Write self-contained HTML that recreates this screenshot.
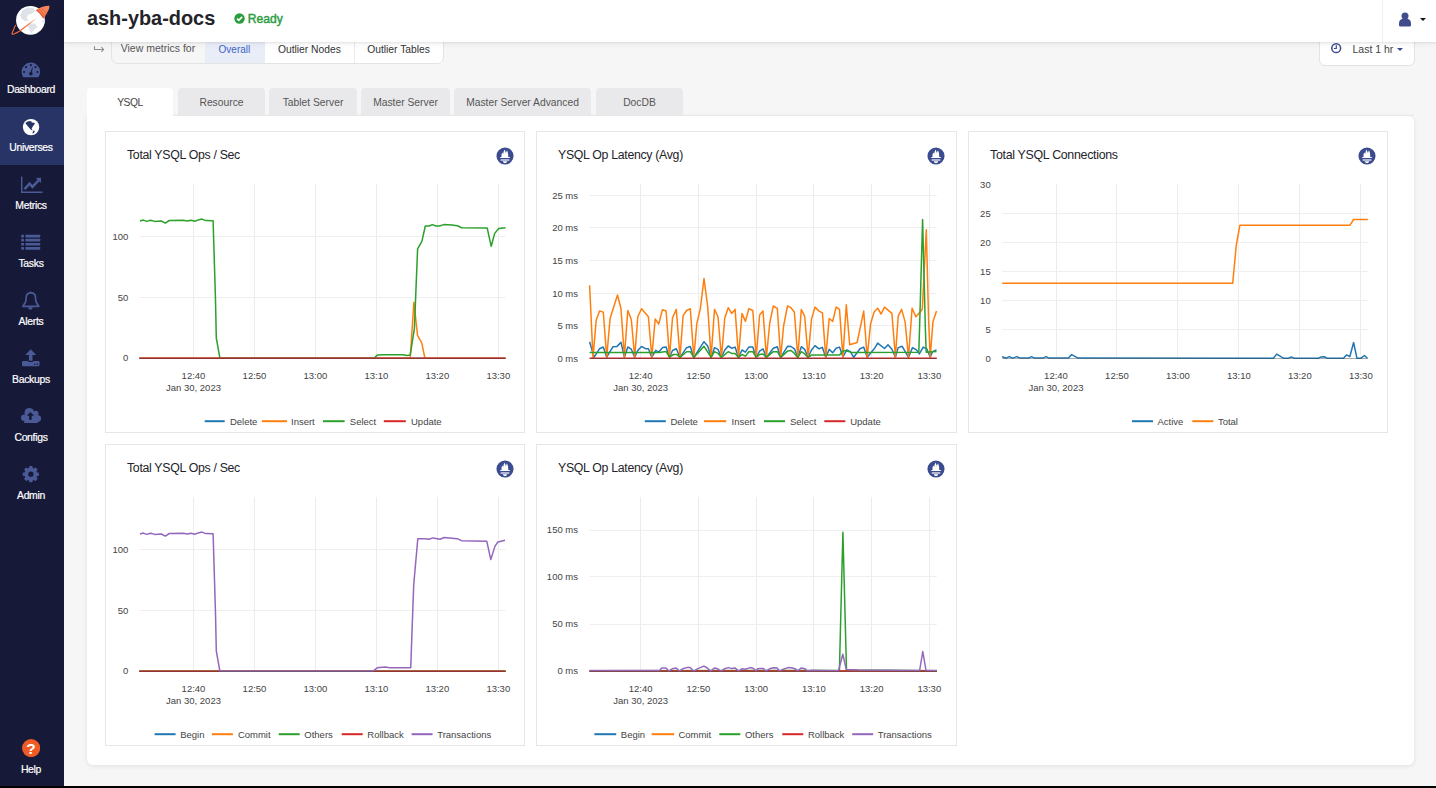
<!DOCTYPE html>
<html><head><meta charset="utf-8"><style>
*{box-sizing:border-box;margin:0;padding:0}
html,body{width:1436px;height:788px;overflow:hidden;background:#f6f6f6;font-family:"Liberation Sans", sans-serif;}
.abs{position:absolute}
#side{position:absolute;left:0;top:0;width:64px;height:786px;background:#161938}
.sitem{position:absolute;left:0;width:64px;height:58px}
.slabel{position:absolute;left:0;width:62px;top:34.6px;text-align:center;color:#fff;font-size:10.4px;font-weight:normal;-webkit-text-stroke:0.2px #fff;letter-spacing:-0.3px}
#header{position:absolute;left:64px;top:0;width:1372px;height:42px;background:#fff;box-shadow:0 1px 2px rgba(0,0,0,0.08), 0 2px 8px rgba(0,0,0,0.05);z-index:5}
#bottombar{position:absolute;left:0;top:786px;width:1436px;height:2px;background:#000;z-index:10}
.panel{position:absolute;width:420px;height:302px;border:1px solid #e6e6e6;background:#fff}
.ptitle{position:absolute;font-size:11.7px;color:#232329;white-space:nowrap;letter-spacing:-0.3px}
.tab{position:absolute;top:88px;height:27px;background:#e9e9eb;border-radius:4px 4px 0 0;font-size:10.3px;color:#555;text-align:center;line-height:29px;white-space:nowrap}
</style></head><body>
<div id="side">
<svg style="position:absolute;left:8px;top:2px" width="46" height="36" viewBox="8 2 46 36">
<defs><linearGradient id="tr" x1="36.4" y1="18" x2="20" y2="30.5" gradientUnits="userSpaceOnUse"><stop offset="0" stop-color="#f26b3a" stop-opacity="0.1"/><stop offset="0.5" stop-color="#f26b3a" stop-opacity="0.9"/><stop offset="1" stop-color="#f26b3a"/></linearGradient></defs>
<circle cx="30.46" cy="20.3" r="14.4" fill="#fff"/>
<path d="M20.4 15.7 L22.2 10.2 L27.7 7.5 L33.2 7.9 L35.5 11.1 L31.4 13.9 L27.7 14.8 L26.8 18.4 L29.1 20.3 L25 21.2 L21.3 18.4 Z" fill="#dfe3e7"/>
<path d="M29.1 23.5 L34.6 23.5 L37.8 26.7 L33.6 30.3 L30.9 33.5 L29.5 29.4 L27.7 25.8 Z" fill="#dfe3e7"/>
<path d="M41.4 19.4 L44.9 20.5 L44.6 23.5 L42 22.5 Z" fill="#e6e9ec"/>
<path d="M36.4 17.8 L20.5 29.6 L21.2 30.8 L36.9 18.6 Z" fill="url(#tr)"/>
<path d="M21 30.2 C18 32 15 33.6 13 34.2 C12 34.5 11.6 33.8 12.4 32.6 C13 31 14 28 15.6 25" fill="none" stroke="#f26b3a" stroke-width="1.1"/>
<path d="M35.9 10.2 C38.5 8.3 41 7 43.7 6.4 C46 5.8 48 5.6 49.4 5.8 C49.6 7.5 49 9.5 47.8 11.5 C46.5 14 45 16.5 43.2 18.4 C41.5 15.5 39 12.2 35.9 10.2 Z" fill="#f5845a"/>
<path d="M35.9 10.2 C39 12.2 41.5 15.5 43.2 18.4 L44.2 17.4 C42.5 14.5 40 11.5 37.2 9.4 Z" fill="#e85a2a"/>
<path d="M38.6 8.7 C41.3 10.6 43.6 13.6 45.3 16.2" fill="none" stroke="#e85a2a" stroke-width="0.9"/>
<path d="M40.9 7.5 C43.5 9.4 45.6 12 47.1 14.2" fill="none" stroke="#e85a2a" stroke-width="0.8"/>
</svg>
<div class="sitem" style="top:49px;"><svg style="position:absolute;left:16px;top:0px" width="32" height="32" viewBox="0 0 32 32"><g transform="translate(4 11)"><path d="M3.2 17.2 A9.3 9.3 0 1 1 18.5 17.2 Z" fill="#4a5a96"/><g fill="#161938"><circle cx="4.1" cy="12" r="1.1"/><circle cx="6.05" cy="7.1" r="1.1"/><circle cx="10.86" cy="5.2" r="1.1"/><circle cx="15.5" cy="7.1" r="1.1"/><circle cx="17.5" cy="12" r="1.1"/><circle cx="10.9" cy="13.8" r="1.8"/></g><path d="M10.2 13.6 L12.2 7.6 L12.8 7.8 L11.6 14 Z" fill="#161938"/></g></svg><div class="slabel">Dashboard</div></div>
<div class="sitem" style="top:107px;background:#283466;"><svg style="position:absolute;left:16px;top:0px" width="32" height="32" viewBox="0 0 32 32"><g transform="translate(4 11)"><circle cx="11.05" cy="9.1" r="8.2" fill="#fff"/><path d="M5.4 4.9 L7.5 3.5 L10.2 3.1 L12 3.9 L11.6 4.8 L13.2 4.4 L15 5.5 L13.5 7.6 L12.2 9.4 L11.6 10.4 L12.6 12.2 L11.2 11.9 L9.6 10.3 L8 8.6 L6.4 6.6 Z" fill="#283466"/><path d="M13.6 12.4 C14.8 12.6 15 13.6 14.2 14.4 L12.7 15.8 C12.5 14.6 12.6 13.2 13.6 12.4 Z" fill="#283466"/></g></svg><div class="slabel">Universes</div></div>
<div class="sitem" style="top:165px;"><svg style="position:absolute;left:16px;top:0px" width="32" height="32" viewBox="0 0 32 32"><g fill="#4a5a96"><rect x="5.0" y="11.6" width="1.45" height="16.4"/><rect x="5.0" y="26.5" width="21.5" height="1.5"/><path d="M19.9 13.1 L25.1 12.8 L24.9 17.9 Z"/></g><path d="M8.5 24.2 L13.55 18.7 L16.45 21.9 L22.6 15.4" fill="none" stroke="#4a5a96" stroke-width="2.5"/></svg><div class="slabel">Metrics</div></div>
<div class="sitem" style="top:223px;"><svg style="position:absolute;left:16px;top:0px" width="32" height="32" viewBox="0 0 32 32"><g fill="#4a5a96"><rect x="5.15" y="11.75" width="2.85" height="2.65" rx="0.4"/><rect x="9.4" y="11.75" width="14.8" height="2.65" rx="0.4"/><rect x="5.15" y="15.85" width="2.85" height="2.65" rx="0.4"/><rect x="9.4" y="15.85" width="14.8" height="2.65" rx="0.4"/><rect x="5.15" y="19.95" width="2.85" height="2.65" rx="0.4"/><rect x="9.4" y="19.95" width="14.8" height="2.65" rx="0.4"/><rect x="5.15" y="24.05" width="2.85" height="2.65" rx="0.4"/><rect x="9.4" y="24.05" width="14.8" height="2.65" rx="0.4"/></g></svg><div class="slabel">Tasks</div></div>
<div class="sitem" style="top:281px;"><svg style="position:absolute;left:16px;top:0px" width="32" height="32" viewBox="0 0 32 32"><path d="M6.9 25.3 L9.5 21.2 C9.9 19.6 10.2 18 10.2 16.6 C10.2 13.6 12 11.9 14.85 11.9 C17.7 11.9 19.5 13.6 19.5 16.6 C19.5 18 19.8 19.6 20.2 21.2 L22.8 25.3 Z" fill="none" stroke="#4a5a96" stroke-width="1.7" stroke-linejoin="round"/><path d="M12.1 26.2 H16.7 C16.6 27.6 15.8 28.6 14.4 28.6 C13 28.6 12.2 27.6 12.1 26.2 Z" fill="#4a5a96"/><circle cx="14.85" cy="11.3" r="0.9" fill="#4a5a96"/></svg><div class="slabel">Alerts</div></div>
<div class="sitem" style="top:339px;"><svg style="position:absolute;left:16px;top:0px" width="32" height="32" viewBox="0 0 32 32"><g fill="#4a5a96"><rect x="6" y="22.1" width="17.5" height="5.1" rx="1"/></g><rect x="12" y="20.5" width="5.3" height="2.4" rx="1" fill="#161938"/><g fill="#4a5a96"><path d="M14.75 10.3 L20.3 16 H16.5 V21.7 H12.9 V16 H9.2 Z"/></g><circle cx="18.7" cy="25.2" r="0.75" fill="#161938"/><circle cx="21.4" cy="25.2" r="0.75" fill="#161938"/></svg><div class="slabel">Backups</div></div>
<div class="sitem" style="top:397px;"><svg style="position:absolute;left:16px;top:0px" width="32" height="32" viewBox="0 0 32 32"><g fill="#4a5a96"><circle cx="13.3" cy="15.7" r="4.8"/><circle cx="19.9" cy="16.4" r="2.6"/><circle cx="8.2" cy="20.8" r="3.2"/><circle cx="21.8" cy="21.6" r="3.3"/><rect x="8.2" y="18" width="13.6" height="8" /></g><path d="M14.4 15 L18 18.7 H15.65 V22.8 H13.15 V18.7 H10.8 Z" fill="#161938"/></svg><div class="slabel">Configs</div></div>
<div class="sitem" style="top:455px;"><svg style="position:absolute;left:16px;top:0px" width="32" height="32" viewBox="0 0 32 32"><g fill="#4a5a96"><circle cx="14.86" cy="19.2" r="6.4"/><rect x="13.06" y="11.10" width="3.6" height="16.2" rx="0.8" transform="rotate(0 14.86 19.2)"/><rect x="13.06" y="11.10" width="3.6" height="16.2" rx="0.8" transform="rotate(45 14.86 19.2)"/><rect x="13.06" y="11.10" width="3.6" height="16.2" rx="0.8" transform="rotate(90 14.86 19.2)"/><rect x="13.06" y="11.10" width="3.6" height="16.2" rx="0.8" transform="rotate(135 14.86 19.2)"/></g><circle cx="14.86" cy="19.2" r="2.6" fill="#161938"/></svg><div class="slabel">Admin</div></div>
<div class="sitem" style="top:726px"><svg style="position:absolute;left:21.8px;top:13.3px" width="18.2" height="18.2" viewBox="0 0 18.2 18.2"><circle cx="9.1" cy="9.1" r="9.1" fill="#ef5b25"/><text x="9.1" y="14.6" text-anchor="middle" font-size="15.5" font-weight="bold" fill="#fff" font-family="'Liberation Sans', sans-serif">?</text></svg><div class="slabel" style="top:37.5px">Help</div></div>
</div>

<div id="header">
<div class="abs" style="left:23px;top:7.3px;font-size:19.9px;font-weight:bold;color:#232329;white-space:nowrap">ash-yba-docs</div>
<svg class="abs" style="left:170px;top:13px" width="11" height="11" viewBox="0 0 11 11"><circle cx="5.5" cy="5.5" r="5.2" fill="#2a9d3f"/><path d="M3 5.7 L4.8 7.4 L8.1 3.9" fill="none" stroke="#fff" stroke-width="1.6"/></svg>
<div class="abs" style="left:183.8px;top:12.1px;font-size:12.1px;font-weight:normal;-webkit-text-stroke:0.45px #2a9d3f;color:#2a9d3f;white-space:nowrap">Ready</div>
<div class="abs" style="left:1318px;top:0;width:1px;height:42px;background:#f0f0f0"></div>
<svg class="abs" style="left:1334px;top:12px" width="14" height="15" viewBox="0 0 14 15"><circle cx="7" cy="3.9" r="3.5" fill="#414c8c"/><path d="M1 11.5 C1 8.8 2.6 7.1 4.6 7.1 H9.4 C11.4 7.1 13 8.8 13 11.5 V13 C13 14 12.3 14.6 11.5 14.6 H2.5 C1.7 14.6 1 14 1 13 Z" fill="#414c8c"/></svg>
<div class="abs" style="left:1356px;top:18px;width:0;height:0;border-left:3px solid transparent;border-right:3px solid transparent;border-top:3.5px solid #111"></div>
</div>

<!-- view metrics toolbar -->
<svg class="abs" style="left:88px;top:40px" width="24" height="20" viewBox="88 40 24 20"><path d="M94.5 46.2 V49.4 H103.4 M101.4 47.2 L103.6 49.4 L101.4 51.8" fill="none" stroke="#8c8c8c" stroke-width="1.05"/></svg>
<div class="abs" style="left:111px;top:30px;width:333px;height:34px;border:1px solid #e3e3e3;border-radius:0 0 7px 7px;background:#f6f6f6;overflow:hidden">
 <div class="abs" style="left:8.7px;top:11px;font-size:10.5px;color:#555;white-space:nowrap">View metrics for</div>
 <div class="abs" style="left:92.5px;top:0;width:60px;height:33px;background:#e8edf8"></div>
 <div class="abs" style="left:106.6px;top:13px;font-size:10px;color:#3f63c7;white-space:nowrap">Overall</div>
 <div class="abs" style="left:152.5px;top:0;width:181px;height:33px;background:#fff"></div>
 <div class="abs" style="left:241.5px;top:0;width:1px;height:33px;background:#ececec"></div>
 <div class="abs" style="left:165.9px;top:13px;font-size:10.3px;color:#333;white-space:nowrap">Outlier Nodes</div>
 <div class="abs" style="left:255.2px;top:13px;font-size:10.3px;color:#333;white-space:nowrap">Outlier Tables</div>
</div>

<!-- time range -->
<div class="abs" style="left:1319px;top:30px;width:96px;height:36px;border:1px solid #e3e3e3;border-radius:0 0 6px 6px;background:#fff"></div>
<svg class="abs" style="left:1330px;top:42px" width="12" height="12" viewBox="0 0 12 12"><circle cx="6.2" cy="6.2" r="4.4" fill="none" stroke="#3b4b8f" stroke-width="1.5"/><path d="M6.3 3.3 V6.5 H3.9" fill="none" stroke="#3b4b8f" stroke-width="1.2"/></svg>
<div class="abs" style="left:1352.5px;top:43px;font-size:10.5px;color:#444;white-space:nowrap">Last 1 hr</div>
<div class="abs" style="left:1397px;top:48px;width:0;height:0;border-left:3px solid transparent;border-right:3px solid transparent;border-top:3px solid #3b4b8f"></div>

<!-- main container -->
<div class="abs" style="left:87px;top:116px;width:1327px;height:649px;background:#fff;border-radius:0 6px 6px 6px;box-shadow:0 1px 5px rgba(0,0,0,0.09)"></div>
<div class="tab" style="left:87px;width:86px;background:#fff;color:#444;height:29px;letter-spacing:-0.45px">YSQL</div>
<div class="abs" style="left:173px;top:115px;width:1241px;height:1px;background:#e8e8ea;z-index:2"></div>
<div class="tab" style="left:178px;width:87px">Resource</div>
<div class="tab" style="left:269px;width:88px">Tablet Server</div>
<div class="tab" style="left:361px;width:89px">Master Server</div>
<div class="tab" style="left:454px;width:137px">Master Server Advanced</div>
<div class="tab" style="left:596px;width:87px">DocDB</div>

<div class="panel" style="left:105px;top:131px;width:420px"></div>
<div class="ptitle" style="left:127px;top:147.8px;font-size:12.3px">Total YSQL Ops / Sec</div>
<svg style="position:absolute;left:495.5px;top:146.5px" width="18" height="18" viewBox="0 0 18 18">
<circle cx="9" cy="9" r="8.55" fill="#3b4b8f"/>
<path d="M3.6 10.1 L5.6 9.9 C5.3 8.5 5.5 7.0 6.3 5.6 L7.1 7.0 C7.3 5.4 7.8 4.0 8.5 2.4 C9.2 3.8 9.6 5.0 9.9 6.0 L10.9 3.3 C11.8 5.0 12.4 6.8 12.2 9.9 L14.5 10.1 L13.2 10.9 H5.0 Z" fill="#fff"/>
<rect x="4.65" y="12.4" width="8.7" height="1.2" fill="#fff"/>
<path d="M6.75 14.3 H11.25 C11.1 15.4 10.2 16.1 9 16.1 C7.8 16.1 6.9 15.4 6.75 14.3 Z" fill="#fff"/>
</svg>
<div class="panel" style="left:536px;top:131px;width:421px"></div>
<div class="ptitle" style="left:558px;top:147.8px;font-size:12.3px">YSQL Op Latency (Avg)</div>
<svg style="position:absolute;left:926.5px;top:146.5px" width="18" height="18" viewBox="0 0 18 18">
<circle cx="9" cy="9" r="8.55" fill="#3b4b8f"/>
<path d="M3.6 10.1 L5.6 9.9 C5.3 8.5 5.5 7.0 6.3 5.6 L7.1 7.0 C7.3 5.4 7.8 4.0 8.5 2.4 C9.2 3.8 9.6 5.0 9.9 6.0 L10.9 3.3 C11.8 5.0 12.4 6.8 12.2 9.9 L14.5 10.1 L13.2 10.9 H5.0 Z" fill="#fff"/>
<rect x="4.65" y="12.4" width="8.7" height="1.2" fill="#fff"/>
<path d="M6.75 14.3 H11.25 C11.1 15.4 10.2 16.1 9 16.1 C7.8 16.1 6.9 15.4 6.75 14.3 Z" fill="#fff"/>
</svg>
<div class="panel" style="left:968px;top:131px;width:420px"></div>
<div class="ptitle" style="left:990px;top:147.8px;font-size:12.4px">Total YSQL Connections</div>
<svg style="position:absolute;left:1357.5px;top:146.5px" width="18" height="18" viewBox="0 0 18 18">
<circle cx="9" cy="9" r="8.55" fill="#3b4b8f"/>
<path d="M3.6 10.1 L5.6 9.9 C5.3 8.5 5.5 7.0 6.3 5.6 L7.1 7.0 C7.3 5.4 7.8 4.0 8.5 2.4 C9.2 3.8 9.6 5.0 9.9 6.0 L10.9 3.3 C11.8 5.0 12.4 6.8 12.2 9.9 L14.5 10.1 L13.2 10.9 H5.0 Z" fill="#fff"/>
<rect x="4.65" y="12.4" width="8.7" height="1.2" fill="#fff"/>
<path d="M6.75 14.3 H11.25 C11.1 15.4 10.2 16.1 9 16.1 C7.8 16.1 6.9 15.4 6.75 14.3 Z" fill="#fff"/>
</svg>
<div class="panel" style="left:105px;top:444px;width:420px"></div>
<div class="ptitle" style="left:127px;top:460.8px;font-size:12.3px">Total YSQL Ops / Sec</div>
<svg style="position:absolute;left:495.5px;top:459.5px" width="18" height="18" viewBox="0 0 18 18">
<circle cx="9" cy="9" r="8.55" fill="#3b4b8f"/>
<path d="M3.6 10.1 L5.6 9.9 C5.3 8.5 5.5 7.0 6.3 5.6 L7.1 7.0 C7.3 5.4 7.8 4.0 8.5 2.4 C9.2 3.8 9.6 5.0 9.9 6.0 L10.9 3.3 C11.8 5.0 12.4 6.8 12.2 9.9 L14.5 10.1 L13.2 10.9 H5.0 Z" fill="#fff"/>
<rect x="4.65" y="12.4" width="8.7" height="1.2" fill="#fff"/>
<path d="M6.75 14.3 H11.25 C11.1 15.4 10.2 16.1 9 16.1 C7.8 16.1 6.9 15.4 6.75 14.3 Z" fill="#fff"/>
</svg>
<div class="panel" style="left:536px;top:444px;width:421px"></div>
<div class="ptitle" style="left:558px;top:460.8px;font-size:12.3px">YSQL Op Latency (Avg)</div>
<svg style="position:absolute;left:926.5px;top:459.5px" width="18" height="18" viewBox="0 0 18 18">
<circle cx="9" cy="9" r="8.55" fill="#3b4b8f"/>
<path d="M3.6 10.1 L5.6 9.9 C5.3 8.5 5.5 7.0 6.3 5.6 L7.1 7.0 C7.3 5.4 7.8 4.0 8.5 2.4 C9.2 3.8 9.6 5.0 9.9 6.0 L10.9 3.3 C11.8 5.0 12.4 6.8 12.2 9.9 L14.5 10.1 L13.2 10.9 H5.0 Z" fill="#fff"/>
<rect x="4.65" y="12.4" width="8.7" height="1.2" fill="#fff"/>
<path d="M6.75 14.3 H11.25 C11.1 15.4 10.2 16.1 9 16.1 C7.8 16.1 6.9 15.4 6.75 14.3 Z" fill="#fff"/>
</svg>
<svg class="abs" style="left:0;top:0" width="1436" height="788" viewBox="0 0 1436 788" font-family="'Liberation Sans', sans-serif">
<line x1="193.5" y1="184" x2="193.5" y2="358" stroke="#ececec" stroke-width="1"/>
<line x1="254.5" y1="184" x2="254.5" y2="358" stroke="#ececec" stroke-width="1"/>
<line x1="315.5" y1="184" x2="315.5" y2="358" stroke="#ececec" stroke-width="1"/>
<line x1="376.5" y1="184" x2="376.5" y2="358" stroke="#ececec" stroke-width="1"/>
<line x1="437.5" y1="184" x2="437.5" y2="358" stroke="#ececec" stroke-width="1"/>
<line x1="498.5" y1="184" x2="498.5" y2="358" stroke="#ececec" stroke-width="1"/>
<line x1="139.4" y1="297.5" x2="505.5" y2="297.5" stroke="#efefef" stroke-width="1"/>
<line x1="139.4" y1="236.5" x2="505.5" y2="236.5" stroke="#efefef" stroke-width="1"/>
<text x="128.3" y="361.4" font-size="9.5" text-anchor="end" fill="#444" font-weight="normal">0</text>
<text x="128.3" y="300.7" font-size="9.5" text-anchor="end" fill="#444" font-weight="normal">50</text>
<text x="128.3" y="239.9" font-size="9.5" text-anchor="end" fill="#444" font-weight="normal">100</text>
<text x="193.5" y="379.0" font-size="9.5" text-anchor="middle" fill="#444" font-weight="normal">12:40</text>
<text x="254.5" y="379.0" font-size="9.5" text-anchor="middle" fill="#444" font-weight="normal">12:50</text>
<text x="315.4" y="379.0" font-size="9.5" text-anchor="middle" fill="#444" font-weight="normal">13:00</text>
<text x="376.4" y="379.0" font-size="9.5" text-anchor="middle" fill="#444" font-weight="normal">13:10</text>
<text x="437.3" y="379.0" font-size="9.5" text-anchor="middle" fill="#444" font-weight="normal">13:20</text>
<text x="498.3" y="379.0" font-size="9.5" text-anchor="middle" fill="#444" font-weight="normal">13:30</text>
<text x="193.5" y="390.6" font-size="9.5" text-anchor="middle" fill="#444" font-weight="normal">Jan 30, 2023</text>
<line x1="204.7" y1="421.2" x2="224.7" y2="421.2" stroke="#1f77b4" stroke-width="2"/>
<text x="229.9" y="424.6" font-size="9.5" text-anchor="start" fill="#444" font-weight="normal">Delete</text>
<line x1="261.9" y1="421.2" x2="287" y2="421.2" stroke="#ff7f0e" stroke-width="2"/>
<text x="291.0" y="424.6" font-size="9.5" text-anchor="start" fill="#444" font-weight="normal">Insert</text>
<line x1="323" y1="421.2" x2="344.6" y2="421.2" stroke="#2ca02c" stroke-width="2"/>
<text x="349.8" y="424.6" font-size="9.5" text-anchor="start" fill="#444" font-weight="normal">Select</text>
<line x1="383.8" y1="421.2" x2="405.8" y2="421.2" stroke="#d62728" stroke-width="2"/>
<text x="411.0" y="424.6" font-size="9.5" text-anchor="start" fill="#444" font-weight="normal">Update</text>
<polyline points="139.4,358.2 505.5,358.2" fill="none" stroke="#1f77b4" stroke-width="1.5" stroke-linejoin="round"/>
<polyline points="139.4,358.2 410.2,358.2 413.9,302.3 417.6,335.7 421.7,342.6 424.9,358.2 505.5,358.2" fill="none" stroke="#ff7f0e" stroke-width="1.5" stroke-linejoin="round"/>
<polyline points="139.9,221.0 143.4,220.1 146.8,221.4 150.6,220.2 154.8,221.4 161.3,221.0 165.3,223.1 169.3,220.5 183.0,220.2 187.2,221.1 191.0,220.2 194.8,221.2 198.2,219.9 201.9,219.1 205.8,220.6 213.1,220.8 215.5,300.0 216.3,338.0 219.9,358.2 374.1,358.2 377.3,355.1 383.3,354.7 403.4,354.7 406.6,355.4 410.2,355.1 414.4,328.4 417.6,248.8 421.9,241.4 425.3,226.0 429.0,226.0 432.4,224.6 435.8,226.0 439.3,226.0 443.8,224.6 451.8,225.1 457.5,225.8 461.5,227.7 487.2,228.0 491.2,246.3 494.7,233.4 498.7,228.5 505.5,227.7" fill="none" stroke="#2ca02c" stroke-width="1.5" stroke-linejoin="round"/>
<polyline points="139.4,358.2 505.5,358.2" fill="none" stroke="#d62728" stroke-width="1.5" stroke-linejoin="round"/>
<line x1="193.5" y1="497" x2="193.5" y2="671" stroke="#ececec" stroke-width="1"/>
<line x1="254.5" y1="497" x2="254.5" y2="671" stroke="#ececec" stroke-width="1"/>
<line x1="315.5" y1="497" x2="315.5" y2="671" stroke="#ececec" stroke-width="1"/>
<line x1="376.5" y1="497" x2="376.5" y2="671" stroke="#ececec" stroke-width="1"/>
<line x1="437.5" y1="497" x2="437.5" y2="671" stroke="#ececec" stroke-width="1"/>
<line x1="498.5" y1="497" x2="498.5" y2="671" stroke="#ececec" stroke-width="1"/>
<line x1="139.4" y1="610.5" x2="505.5" y2="610.5" stroke="#efefef" stroke-width="1"/>
<line x1="139.4" y1="549.5" x2="505.5" y2="549.5" stroke="#efefef" stroke-width="1"/>
<text x="128.3" y="674.4" font-size="9.5" text-anchor="end" fill="#444" font-weight="normal">0</text>
<text x="128.3" y="613.7" font-size="9.5" text-anchor="end" fill="#444" font-weight="normal">50</text>
<text x="128.3" y="552.9" font-size="9.5" text-anchor="end" fill="#444" font-weight="normal">100</text>
<text x="193.5" y="692.0" font-size="9.5" text-anchor="middle" fill="#444" font-weight="normal">12:40</text>
<text x="254.5" y="692.0" font-size="9.5" text-anchor="middle" fill="#444" font-weight="normal">12:50</text>
<text x="315.4" y="692.0" font-size="9.5" text-anchor="middle" fill="#444" font-weight="normal">13:00</text>
<text x="376.4" y="692.0" font-size="9.5" text-anchor="middle" fill="#444" font-weight="normal">13:10</text>
<text x="437.3" y="692.0" font-size="9.5" text-anchor="middle" fill="#444" font-weight="normal">13:20</text>
<text x="498.3" y="692.0" font-size="9.5" text-anchor="middle" fill="#444" font-weight="normal">13:30</text>
<text x="193.5" y="703.6" font-size="9.5" text-anchor="middle" fill="#444" font-weight="normal">Jan 30, 2023</text>
<line x1="154.6" y1="734.2" x2="175.6" y2="734.2" stroke="#1f77b4" stroke-width="2"/>
<text x="180.2" y="737.6" font-size="9.5" text-anchor="start" fill="#444" font-weight="normal">Begin</text>
<line x1="211.9" y1="734.2" x2="232.9" y2="734.2" stroke="#ff7f0e" stroke-width="2"/>
<text x="237.9" y="737.6" font-size="9.5" text-anchor="start" fill="#444" font-weight="normal">Commit</text>
<line x1="278.7" y1="734.2" x2="299.7" y2="734.2" stroke="#2ca02c" stroke-width="2"/>
<text x="304.3" y="737.6" font-size="9.5" text-anchor="start" fill="#444" font-weight="normal">Others</text>
<line x1="341.7" y1="734.2" x2="362.7" y2="734.2" stroke="#d62728" stroke-width="2"/>
<text x="367.3" y="737.6" font-size="9.5" text-anchor="start" fill="#444" font-weight="normal">Rollback</text>
<line x1="411.6" y1="734.2" x2="432.6" y2="734.2" stroke="#9467bd" stroke-width="2"/>
<text x="437.2" y="737.6" font-size="9.5" text-anchor="start" fill="#444" font-weight="normal">Transactions</text>
<polyline points="139.4,671.2 505.5,671.2" fill="none" stroke="#1f77b4" stroke-width="1.5" stroke-linejoin="round"/>
<polyline points="139.4,671.2 505.5,671.2" fill="none" stroke="#ff7f0e" stroke-width="1.5" stroke-linejoin="round"/>
<polyline points="139.4,671.2 505.5,671.2" fill="none" stroke="#2ca02c" stroke-width="1.5" stroke-linejoin="round"/>
<polyline points="139.4,671.2 505.5,671.2" fill="none" stroke="#d62728" stroke-width="1.5" stroke-linejoin="round"/>
<polyline points="139.9,534.0 143.4,533.1 146.8,534.4 150.6,533.2 154.8,534.4 161.3,534.0 165.3,536.1 169.3,533.5 183.0,533.2 187.2,534.1 191.0,533.2 194.8,534.2 198.2,532.9 201.9,532.1 205.8,533.6 213.1,533.8 215.5,613.0 216.3,651.0 219.9,671.2 373.1,671.2 377.2,667.8 385.3,667.1 389.4,667.8 410.7,667.8 413.7,585.0 417.8,538.7 424.9,538.7 428.9,539.3 433.0,537.9 440.1,539.3 444.2,537.5 457.3,538.7 461.4,540.7 486.8,541.3 490.8,559.6 494.9,546.4 497.9,541.9 505.0,540.3" fill="none" stroke="#9467bd" stroke-width="1.5" stroke-linejoin="round"/>
<line x1="640.5" y1="184" x2="640.5" y2="358.3" stroke="#ececec" stroke-width="1"/>
<line x1="698.5" y1="184" x2="698.5" y2="358.3" stroke="#ececec" stroke-width="1"/>
<line x1="756.5" y1="184" x2="756.5" y2="358.3" stroke="#ececec" stroke-width="1"/>
<line x1="813.5" y1="184" x2="813.5" y2="358.3" stroke="#ececec" stroke-width="1"/>
<line x1="871.5" y1="184" x2="871.5" y2="358.3" stroke="#ececec" stroke-width="1"/>
<line x1="929.5" y1="184" x2="929.5" y2="358.3" stroke="#ececec" stroke-width="1"/>
<line x1="589.6" y1="325.5" x2="936.8" y2="325.5" stroke="#efefef" stroke-width="1"/>
<line x1="589.6" y1="293.5" x2="936.8" y2="293.5" stroke="#efefef" stroke-width="1"/>
<line x1="589.6" y1="260.5" x2="936.8" y2="260.5" stroke="#efefef" stroke-width="1"/>
<line x1="589.6" y1="227.5" x2="936.8" y2="227.5" stroke="#efefef" stroke-width="1"/>
<line x1="589.6" y1="195.5" x2="936.8" y2="195.5" stroke="#efefef" stroke-width="1"/>
<text x="578.0" y="361.7" font-size="9.5" text-anchor="end" fill="#444" font-weight="normal">0 ms</text>
<text x="578.0" y="329.1" font-size="9.5" text-anchor="end" fill="#444" font-weight="normal">5 ms</text>
<text x="578.0" y="296.5" font-size="9.5" text-anchor="end" fill="#444" font-weight="normal">10 ms</text>
<text x="578.0" y="263.9" font-size="9.5" text-anchor="end" fill="#444" font-weight="normal">15 ms</text>
<text x="578.0" y="231.3" font-size="9.5" text-anchor="end" fill="#444" font-weight="normal">20 ms</text>
<text x="578.0" y="198.7" font-size="9.5" text-anchor="end" fill="#444" font-weight="normal">25 ms</text>
<text x="640.7" y="379.0" font-size="9.5" text-anchor="middle" fill="#444" font-weight="normal">12:40</text>
<text x="698.4" y="379.0" font-size="9.5" text-anchor="middle" fill="#444" font-weight="normal">12:50</text>
<text x="756.1" y="379.0" font-size="9.5" text-anchor="middle" fill="#444" font-weight="normal">13:00</text>
<text x="813.9" y="379.0" font-size="9.5" text-anchor="middle" fill="#444" font-weight="normal">13:10</text>
<text x="871.6" y="379.0" font-size="9.5" text-anchor="middle" fill="#444" font-weight="normal">13:20</text>
<text x="929.3" y="379.0" font-size="9.5" text-anchor="middle" fill="#444" font-weight="normal">13:30</text>
<text x="640.7" y="390.6" font-size="9.5" text-anchor="middle" fill="#444" font-weight="normal">Jan 30, 2023</text>
<line x1="644.8" y1="421.2" x2="665.8" y2="421.2" stroke="#1f77b4" stroke-width="2"/>
<text x="670.4" y="424.6" font-size="9.5" text-anchor="start" fill="#444" font-weight="normal">Delete</text>
<line x1="704" y1="421.2" x2="726.2" y2="421.2" stroke="#ff7f0e" stroke-width="2"/>
<text x="731.5" y="424.6" font-size="9.5" text-anchor="start" fill="#444" font-weight="normal">Insert</text>
<line x1="764" y1="421.2" x2="785" y2="421.2" stroke="#2ca02c" stroke-width="2"/>
<text x="790.0" y="424.6" font-size="9.5" text-anchor="start" fill="#444" font-weight="normal">Select</text>
<line x1="824.3" y1="421.2" x2="845.3" y2="421.2" stroke="#d62728" stroke-width="2"/>
<text x="850.2" y="424.6" font-size="9.5" text-anchor="start" fill="#444" font-weight="normal">Update</text>
<polyline points="589.6,341.8 594.1,357.2 599.6,348.7 603.3,347.0 606.7,357.2 613.0,346.7 617.0,346.4 621.0,342.4 624.4,357.2 627.8,347.0 631.3,349.2 634.7,357.2 637.8,350.4 641.5,346.4 645.5,348.7 648.4,348.7 651.8,357.2 655.8,350.4 658.7,352.1 662.7,347.5 666.1,347.0 669.5,357.2 672.5,350.5 676.3,348.8 680.0,357.4 686.6,347.7 690.3,346.5 693.8,357.4 704.0,341.7 707.7,346.0 711.1,357.4 714.5,347.7 718.0,349.4 721.4,357.4 724.8,350.0 728.2,346.0 731.7,348.2 735.1,347.1 738.5,357.4 742.0,350.0 745.4,352.2 748.8,347.1 752.8,347.1 756.2,357.4 759.6,351.1 763.0,348.8 766.4,357.4 773.3,348.2 777.3,346.7 780.7,357.4 787.5,346.3 791.0,346.5 794.4,348.8 797.8,357.4 801.3,346.7 804.7,349.4 808.1,357.4 811.5,350.0 815.0,345.6 819.0,348.8 822.4,347.4 825.8,357.4 829.2,349.4 832.7,352.8 836.1,348.2 839.5,347.1 842.9,356.8 846.8,349.9 850.3,351.6 853.7,357.3 860.0,348.8 863.7,347.1 867.2,357.3 874.2,348.8 877.7,343.1 884.5,348.5 888.0,344.8 891.9,349.3 895.4,357.3 898.2,347.6 902.2,346.3 908.5,357.3 912.5,347.6 916.5,349.9 919.3,353.9 923.3,347.1 926.8,348.8 930.2,357.3 932.5,351.6 936.5,349.9" fill="none" stroke="#1f77b4" stroke-width="1.5" stroke-linejoin="round"/>
<polyline points="589.6,285.3 593.0,357.8 596.2,320.1 599.6,311.0 603.3,312.1 606.7,357.2 610.1,318.4 617.5,295.0 621.0,308.7 624.4,357.2 627.8,310.4 631.3,319.5 634.7,357.2 637.8,316.7 641.5,308.7 648.4,316.7 651.8,357.2 655.2,319.0 658.7,324.1 662.4,309.8 666.1,311.0 669.5,357.2 672.5,318.0 676.3,309.4 680.0,357.4 683.1,315.7 686.6,310.5 690.3,308.8 693.8,357.4 696.8,323.7 700.3,308.8 704.0,278.6 707.7,306.5 711.1,357.4 714.5,309.4 718.0,316.8 721.4,357.4 724.8,318.0 728.2,307.7 731.7,313.4 735.1,309.4 738.5,357.4 742.0,313.4 745.4,321.4 748.8,308.8 752.8,310.5 756.2,357.4 759.6,315.1 763.0,311.1 766.4,357.4 769.8,322.5 773.3,306.0 777.3,308.3 780.7,357.4 783.6,326.0 787.5,306.0 791.0,307.7 794.4,312.3 797.8,357.4 801.3,309.4 804.7,316.3 808.1,357.4 811.5,319.1 815.0,307.1 819.0,311.1 822.4,312.8 825.8,357.4 829.2,318.5 832.7,321.4 836.1,307.1 839.5,309.4 842.9,357.3 846.3,304.8 849.7,344.8 857.1,342.5 863.7,311.1 867.2,357.3 870.6,323.7 874.2,311.7 877.7,308.2 881.1,314.0 884.5,307.1 891.9,313.4 895.4,357.3 898.2,316.2 901.6,309.4 905.1,321.9 908.5,357.3 912.1,308.2 915.9,316.8 919.9,312.2 922.3,309.2 926.3,229.8 928.6,320.0 930.2,357.3 933.0,321.4 936.5,311.1" fill="none" stroke="#ff7f0e" stroke-width="1.5" stroke-linejoin="round"/>
<polyline points="589.6,352.4 659.2,352.4 666.1,351.5 669.5,357.0 673.4,354.5 676.9,354.5 680.0,357.4 686.6,351.7 690.3,351.7 693.8,357.4 704.0,346.3 711.1,357.4 714.5,351.7 718.0,353.4 721.4,357.4 728.2,351.7 731.7,353.4 735.1,353.4 738.5,357.4 742.0,354.5 745.4,356.2 748.8,351.7 752.8,351.7 756.2,357.4 759.6,354.5 763.0,353.9 766.4,357.4 773.3,351.7 777.3,351.7 780.7,357.4 787.5,351.1 791.0,350.5 794.4,353.4 797.8,357.4 801.3,351.7 804.7,353.9 808.1,357.4 811.5,355.1 839.5,355.1 842.9,351.1 845.0,350.5 851.4,352.4 918.8,352.2 919.8,320.0 922.6,219.5 925.4,330.0 926.2,352.2 936.5,351.6" fill="none" stroke="#2ca02c" stroke-width="1.5" stroke-linejoin="round"/>
<polyline points="589.6,358.3 936.8,358.3" fill="none" stroke="#d62728" stroke-width="1.5" stroke-linejoin="round"/>
<line x1="640.5" y1="497" x2="640.5" y2="671" stroke="#ececec" stroke-width="1"/>
<line x1="698.5" y1="497" x2="698.5" y2="671" stroke="#ececec" stroke-width="1"/>
<line x1="756.5" y1="497" x2="756.5" y2="671" stroke="#ececec" stroke-width="1"/>
<line x1="813.5" y1="497" x2="813.5" y2="671" stroke="#ececec" stroke-width="1"/>
<line x1="871.5" y1="497" x2="871.5" y2="671" stroke="#ececec" stroke-width="1"/>
<line x1="929.5" y1="497" x2="929.5" y2="671" stroke="#ececec" stroke-width="1"/>
<line x1="589.6" y1="624.5" x2="936.8" y2="624.5" stroke="#efefef" stroke-width="1"/>
<line x1="589.6" y1="576.5" x2="936.8" y2="576.5" stroke="#efefef" stroke-width="1"/>
<line x1="589.6" y1="530.5" x2="936.8" y2="530.5" stroke="#efefef" stroke-width="1"/>
<text x="578.0" y="674.4" font-size="9.5" text-anchor="end" fill="#444" font-weight="normal">0 ms</text>
<text x="578.0" y="627.4" font-size="9.5" text-anchor="end" fill="#444" font-weight="normal">50 ms</text>
<text x="578.0" y="580.4" font-size="9.5" text-anchor="end" fill="#444" font-weight="normal">100 ms</text>
<text x="578.0" y="533.4" font-size="9.5" text-anchor="end" fill="#444" font-weight="normal">150 ms</text>
<text x="640.7" y="692.0" font-size="9.5" text-anchor="middle" fill="#444" font-weight="normal">12:40</text>
<text x="698.4" y="692.0" font-size="9.5" text-anchor="middle" fill="#444" font-weight="normal">12:50</text>
<text x="756.1" y="692.0" font-size="9.5" text-anchor="middle" fill="#444" font-weight="normal">13:00</text>
<text x="813.9" y="692.0" font-size="9.5" text-anchor="middle" fill="#444" font-weight="normal">13:10</text>
<text x="871.6" y="692.0" font-size="9.5" text-anchor="middle" fill="#444" font-weight="normal">13:20</text>
<text x="929.3" y="692.0" font-size="9.5" text-anchor="middle" fill="#444" font-weight="normal">13:30</text>
<text x="640.7" y="703.6" font-size="9.5" text-anchor="middle" fill="#444" font-weight="normal">Jan 30, 2023</text>
<line x1="594.4" y1="734.2" x2="616.2" y2="734.2" stroke="#1f77b4" stroke-width="2"/>
<text x="620.8" y="737.6" font-size="9.5" text-anchor="start" fill="#444" font-weight="normal">Begin</text>
<line x1="651.7" y1="734.2" x2="674.2" y2="734.2" stroke="#ff7f0e" stroke-width="2"/>
<text x="678.4" y="737.6" font-size="9.5" text-anchor="start" fill="#444" font-weight="normal">Commit</text>
<line x1="719.3" y1="734.2" x2="740.3" y2="734.2" stroke="#2ca02c" stroke-width="2"/>
<text x="744.9" y="737.6" font-size="9.5" text-anchor="start" fill="#444" font-weight="normal">Others</text>
<line x1="782.3" y1="734.2" x2="803.3" y2="734.2" stroke="#d62728" stroke-width="2"/>
<text x="807.9" y="737.6" font-size="9.5" text-anchor="start" fill="#444" font-weight="normal">Rollback</text>
<line x1="852.2" y1="734.2" x2="873.2" y2="734.2" stroke="#9467bd" stroke-width="2"/>
<text x="877.7" y="737.6" font-size="9.5" text-anchor="start" fill="#444" font-weight="normal">Transactions</text>
<polyline points="589.6,671.0 936.8,671.0" fill="none" stroke="#1f77b4" stroke-width="1.5" stroke-linejoin="round"/>
<polyline points="589.6,671.0 936.8,671.0" fill="none" stroke="#ff7f0e" stroke-width="1.5" stroke-linejoin="round"/>
<polyline points="589.6,670.8 839.4,670.5 842.9,532.2 846.5,670.1 936.8,670.8" fill="none" stroke="#2ca02c" stroke-width="1.5" stroke-linejoin="round"/>
<polyline points="589.6,671.0 936.8,671.0" fill="none" stroke="#d62728" stroke-width="1.5" stroke-linejoin="round"/>
<polyline points="589.6,670.5 659.6,670.5 661.7,668.0 665.9,668.0 668.8,671.1 672.2,668.8 676.3,668.0 679.3,671.1 682.6,668.8 686.8,667.6 690.1,667.6 693.5,671.1 698.5,668.4 703.9,666.1 707.3,668.0 710.6,671.1 714.4,668.0 717.7,668.8 721.0,671.1 724.4,668.8 728.6,667.6 731.1,668.4 735.2,668.0 738.6,671.1 741.9,668.8 745.3,669.2 750.3,667.6 753.6,668.4 756.1,671.1 757.5,668.8 760.0,668.4 763.4,668.4 765.9,671.1 769.6,668.8 773.4,667.7 777.1,668.0 779.6,671.1 783.4,669.2 788.0,667.6 792.6,668.0 795.9,669.2 797.6,671.1 801.0,668.0 805.1,668.8 807.2,671.1 811.8,670.2 838.5,670.7 842.8,654.2 846.3,669.6 858.7,670.1 919.6,670.5 922.8,651.5 926.0,670.5 936.8,670.5" fill="none" stroke="#9467bd" stroke-width="1.5" stroke-linejoin="round"/>
<line x1="1056.5" y1="184" x2="1056.5" y2="358.1" stroke="#ececec" stroke-width="1"/>
<line x1="1116.5" y1="184" x2="1116.5" y2="358.1" stroke="#ececec" stroke-width="1"/>
<line x1="1177.5" y1="184" x2="1177.5" y2="358.1" stroke="#ececec" stroke-width="1"/>
<line x1="1238.5" y1="184" x2="1238.5" y2="358.1" stroke="#ececec" stroke-width="1"/>
<line x1="1299.5" y1="184" x2="1299.5" y2="358.1" stroke="#ececec" stroke-width="1"/>
<line x1="1360.5" y1="184" x2="1360.5" y2="358.1" stroke="#ececec" stroke-width="1"/>
<line x1="1002.2" y1="329.5" x2="1367.9" y2="329.5" stroke="#efefef" stroke-width="1"/>
<line x1="1002.2" y1="300.5" x2="1367.9" y2="300.5" stroke="#efefef" stroke-width="1"/>
<line x1="1002.2" y1="271.5" x2="1367.9" y2="271.5" stroke="#efefef" stroke-width="1"/>
<line x1="1002.2" y1="242.5" x2="1367.9" y2="242.5" stroke="#efefef" stroke-width="1"/>
<line x1="1002.2" y1="213.5" x2="1367.9" y2="213.5" stroke="#efefef" stroke-width="1"/>
<text x="990.7" y="361.5" font-size="9.5" text-anchor="end" fill="#444" font-weight="normal">0</text>
<text x="990.7" y="332.5" font-size="9.5" text-anchor="end" fill="#444" font-weight="normal">5</text>
<text x="990.7" y="303.5" font-size="9.5" text-anchor="end" fill="#444" font-weight="normal">10</text>
<text x="990.7" y="274.5" font-size="9.5" text-anchor="end" fill="#444" font-weight="normal">15</text>
<text x="990.7" y="245.5" font-size="9.5" text-anchor="end" fill="#444" font-weight="normal">20</text>
<text x="990.7" y="216.5" font-size="9.5" text-anchor="end" fill="#444" font-weight="normal">25</text>
<text x="990.7" y="187.5" font-size="9.5" text-anchor="end" fill="#444" font-weight="normal">30</text>
<text x="1056.0" y="379.0" font-size="9.5" text-anchor="middle" fill="#444" font-weight="normal">12:40</text>
<text x="1117.0" y="379.0" font-size="9.5" text-anchor="middle" fill="#444" font-weight="normal">12:50</text>
<text x="1177.9" y="379.0" font-size="9.5" text-anchor="middle" fill="#444" font-weight="normal">13:00</text>
<text x="1238.9" y="379.0" font-size="9.5" text-anchor="middle" fill="#444" font-weight="normal">13:10</text>
<text x="1299.8" y="379.0" font-size="9.5" text-anchor="middle" fill="#444" font-weight="normal">13:20</text>
<text x="1360.8" y="379.0" font-size="9.5" text-anchor="middle" fill="#444" font-weight="normal">13:30</text>
<text x="1056.0" y="390.6" font-size="9.5" text-anchor="middle" fill="#444" font-weight="normal">Jan 30, 2023</text>
<line x1="1132" y1="421.2" x2="1153" y2="421.2" stroke="#1f77b4" stroke-width="2"/>
<text x="1157.5" y="424.6" font-size="9.5" text-anchor="start" fill="#444" font-weight="normal">Active</text>
<line x1="1192.3" y1="421.2" x2="1213.3" y2="421.2" stroke="#ff7f0e" stroke-width="2"/>
<text x="1217.9" y="424.6" font-size="9.5" text-anchor="start" fill="#444" font-weight="normal">Total</text>
<polyline points="1002.2,356.5 1004.0,357.6 1006.0,358.1 1009.4,356.6 1012.5,358.1 1016.9,356.6 1020.0,358.1 1028.5,358.1 1031.5,356.6 1034.5,358.1 1043.0,358.1 1046.0,356.6 1049.0,358.1 1068.5,358.1 1071.7,354.6 1078.0,358.1 1273.4,358.2 1276.7,354.1 1283.4,358.2 1288.8,358.2 1291.3,356.9 1294.3,358.2 1318.5,358.2 1321.0,356.9 1324.3,356.7 1326.8,358.2 1343.5,358.2 1346.5,354.9 1349.8,356.7 1353.6,342.5 1356.9,358.2 1361.1,358.2 1364.4,355.5 1367.4,358.2" fill="none" stroke="#1f77b4" stroke-width="1.5" stroke-linejoin="round"/>
<polyline points="1002.2,283.2 1232.7,283.2 1236.3,245.1 1239.9,225.2 1350.0,225.2 1353.6,219.5 1367.9,219.5" fill="none" stroke="#ff7f0e" stroke-width="1.5" stroke-linejoin="round"/>
<line x1="139.4" y1="358.5" x2="505.5" y2="358.5" stroke="#444" stroke-opacity="0.45" stroke-width="1"/>
<line x1="139.4" y1="671.5" x2="505.5" y2="671.5" stroke="#444" stroke-opacity="0.45" stroke-width="1"/>
<line x1="589.6" y1="358.5" x2="936.8" y2="358.5" stroke="#444" stroke-opacity="0.45" stroke-width="1"/>
<line x1="589.6" y1="671.5" x2="936.8" y2="671.5" stroke="#444" stroke-opacity="0.45" stroke-width="1"/>
<line x1="1002.2" y1="358.5" x2="1367.9" y2="358.5" stroke="#444" stroke-opacity="0.45" stroke-width="1"/>
</svg>
<div id="bottombar"></div>
</body></html>
